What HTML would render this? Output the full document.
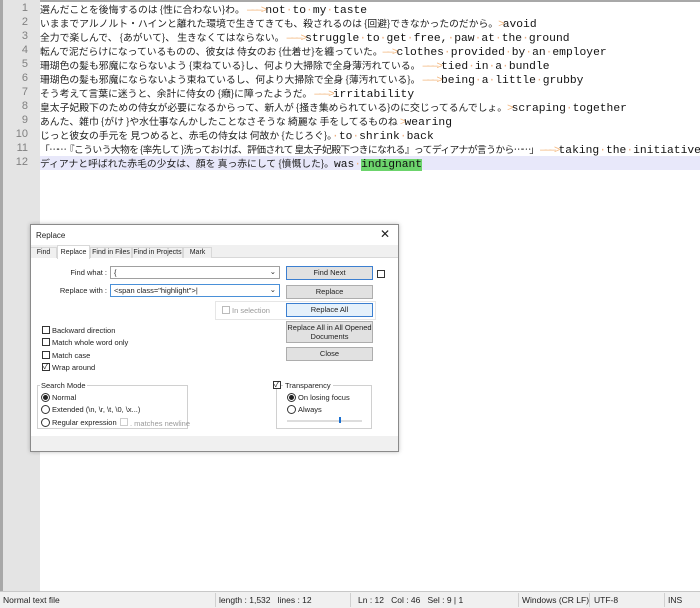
<!DOCTYPE html>
<html><head><meta charset="utf-8"><style>
*{box-sizing:border-box;margin:0;padding:0}
body{width:700px;height:608px;position:relative;background:#fff;overflow:hidden;font-family:"Liberation Sans","Noto Sans CJK JP",sans-serif}
.gut{position:absolute;left:0;top:0;width:40px;height:591px;background:#e4e4e4;border-left:3px solid #a8a8a8}
.topb{position:absolute;left:0;top:0;width:700px;height:2px;background:#a8a8a8}
.ln{position:absolute;left:0;width:28px;text-align:right;font:11px "Liberation Sans",sans-serif;color:#808080}
.tx{position:absolute;left:40px;white-space:nowrap;font:9.8px "Noto Sans CJK JP",sans-serif;color:#222;line-height:14px;height:14px}
.m{font-family:"Liberation Mono",monospace;font-size:11.3px;color:#111;letter-spacing:0}
.d{color:#f0b080}
.ar{color:#f3b880;font-family:"Liberation Mono",monospace;font-size:11px;letter-spacing:-2px}
.hl{position:absolute;left:40px;top:156px;width:660px;height:14px;background:#e8e8fa}
.g{background:#6cd46c}
.status{position:absolute;left:0;top:591px;width:700px;height:17px;background:#f0f0f0;border-top:1px solid #c8c8c8;font-size:8.5px;color:#222}
.status span{position:absolute;top:3px;white-space:nowrap}
.status i{position:absolute;top:1px;width:1px;height:14px;background:#d0d0d0}
.dlg{position:absolute;left:30px;top:224px;width:369px;height:228px;background:#fff;border:1px solid #8a8a8a;box-shadow:0 0 4px rgba(0,0,0,.25);font-size:7.5px;color:#222}
.dlg .a{position:absolute;white-space:nowrap}
.tabs{position:absolute;left:0;top:20px;width:367px;height:13px;background:#f0f0f0;border-bottom:1px solid #d8d8d8}
.tab{position:absolute;top:2px;height:11px;border:1px solid #d8d8d8;border-bottom:none;font-size:7px;background:#f0f0f0;text-align:center;white-space:nowrap;line-height:10px}
.inp{position:absolute;height:13px;border:1px solid #a0a0a0;background:#fff;padding:1px 3px;font-size:7.5px}
.btn{position:absolute;left:255px;width:87px;border:1px solid #adadad;background:#e1e1e1;text-align:center;font-size:7.5px;line-height:11px}
.cb{position:absolute;width:8px;height:8px;border:1px solid #333;background:#fff}
.rb{position:absolute;width:9px;height:9px;border:1px solid #333;border-radius:50%;background:#fff}
.grp{position:absolute;border:1px solid #d0d0d0}
</style></head><body>
<div class="topb"></div>
<div class="gut"></div>
<div class="hl"></div>
<div class="ln" style="top:2px">1</div><div class="ln" style="top:16px">2</div><div class="ln" style="top:30px">3</div><div class="ln" style="top:44px">4</div><div class="ln" style="top:58px">5</div><div class="ln" style="top:72px">6</div><div class="ln" style="top:86px">7</div><div class="ln" style="top:100px">8</div><div class="ln" style="top:114px">9</div><div class="ln" style="top:128px">10</div><div class="ln" style="top:142px">11</div><div class="ln" style="top:156px">12</div>
<div class="tx" style="top:2px">選んだことを後悔するのは {性に合わない}わ。 <span class="ar">———&gt;</span><span class="m">not<span class="d">·</span>to<span class="d">·</span>my<span class="d">·</span>taste</span></div>
<div class="tx" style="top:16px">いままでアルノルト・ハインと離れた環境で生きてきても、殺されるのは {回避}できなかったのだから。<span class="ar">&gt;</span><span class="m">avoid</span></div>
<div class="tx" style="top:30px">全力で楽しんで、 {あがいて}、 生きなくてはならない。 <span class="ar">———&gt;</span><span class="m">struggle<span class="d">·</span>to<span class="d">·</span>get<span class="d">·</span>free,<span class="d">·</span>paw<span class="d">·</span>at<span class="d">·</span>the<span class="d">·</span>ground</span></div>
<div class="tx" style="top:44px">転んで泥だらけになっているものの、彼女は 侍女のお {仕着せ}を纏っていた。<span class="ar">——&gt;</span><span class="m">clothes<span class="d">·</span>provided<span class="d">·</span>by<span class="d">·</span>an<span class="d">·</span>employer</span></div>
<div class="tx" style="top:58px">珊瑚色の髪も邪魔にならないよう {束ねている}し、何より大掃除で全身薄汚れている。 <span class="ar">———&gt;</span><span class="m">tied<span class="d">·</span>in<span class="d">·</span>a<span class="d">·</span>bundle</span></div>
<div class="tx" style="top:72px">珊瑚色の髪も邪魔にならないよう束ねているし、何より大掃除で全身 {薄汚れている}。 <span class="ar">———&gt;</span><span class="m">being<span class="d">·</span>a<span class="d">·</span>little<span class="d">·</span>grubby</span></div>
<div class="tx" style="top:86px">そう考えて言葉に迷うと、余計に侍女の {癪}に障ったようだ。 <span class="ar">———&gt;</span><span class="m">irritability</span></div>
<div class="tx" style="top:100px">皇太子妃殿下のための侍女が必要になるからって、新人が {掻き集められている}のに交じってるんでしょ。<span class="ar">&gt;</span><span class="m">scraping<span class="d">·</span>together</span></div>
<div class="tx" style="top:114px">あんた、雑巾 {がけ }や水仕事なんかしたことなさそうな 綺麗な 手をしてるものね <span class="ar">&gt;</span><span class="m">wearing</span></div>
<div class="tx" style="top:128px">じっと彼女の手元を 見つめると、赤毛の侍女は 何故か {たじろぐ}。<span class="m"><span class="d">·</span>to<span class="d">·</span>shrink<span class="d">·</span>back</span></div>
<div class="tx" style="top:142px;letter-spacing:-0.6px">「<span style="letter-spacing:-2px">……</span>『こういう大物を {率先して }洗っておけば、評価されて 皇太子妃殿下つきになれる』ってディアナが言うから<span style="letter-spacing:-2px">……</span>」 <span class="ar">———&gt;</span><span class="m">taking<span class="d">·</span>the<span class="d">·</span>initiative</span></div>
<div class="tx" style="top:156px">ディアナと呼ばれた赤毛の少女は、顔を 真っ赤にして {憤慨した}。<span class="m">was<span class="d">·</span><span class="g">indignant</span></span></div>

<div class="dlg">
<div class="a" style="left:5px;top:6px;font-size:8px">Replace</div>
<div class="a" style="right:8px;top:2px;font-size:12px">✕</div>
<div class="tabs">
<div class="tab" style="left:0;width:26px;border-left:none">Find</div>
<div class="tab" style="left:26px;width:33px;top:0;height:14px;background:#fff;padding-top:2px">Replace</div>
<div class="tab" style="left:59px;width:42px">Find in Files</div>
<div class="tab" style="left:101px;width:51px">Find in Projects</div>
<div class="tab" style="left:152px;width:29px">Mark</div>
</div>
<div class="a" style="right:291px;top:43px">Find what :</div>
<div class="inp" style="left:79px;top:41px;width:170px">{<span style="position:absolute;right:3px;top:0">⌄</span></div>
<div class="a" style="right:291px;top:61px">Replace with :</div>
<div class="inp" style="left:79px;top:59px;width:170px;border-color:#4a90d8">&lt;span class="highlight"&gt;|<span style="position:absolute;right:3px;top:0">⌄</span></div>
<div class="btn" style="top:41px;height:14px;border-color:#3c7fd0">Find Next</div>
<div class="cb" style="left:346px;top:45px"></div>
<div class="btn" style="top:60px;height:14px">Replace</div>
<div class="grp" style="left:184px;top:76px;width:161px;height:19px;border-color:#e6e6e6"></div>
<div class="cb" style="left:191px;top:81px;border-color:#bbb"></div>
<div class="a" style="left:201px;top:81px;color:#999">In selection</div>
<div class="btn" style="top:78px;height:14px;background:#e5f1fb;border-color:#3c7fd0">Replace All</div>
<div class="btn" style="top:96px;height:22px;line-height:9px;padding-top:1px">Replace All in All Opened Documents</div>
<div class="btn" style="top:122px;height:14px">Close</div>
<div class="cb" style="left:11px;top:101px"></div><div class="a" style="left:21px;top:101px">Backward direction</div>
<div class="cb" style="left:11px;top:113px"></div><div class="a" style="left:21px;top:113px">Match whole word only</div>
<div class="cb" style="left:11px;top:126px"></div><div class="a" style="left:21px;top:126px">Match case</div>
<div class="cb" style="left:11px;top:138px;font-size:8px;line-height:6px">✓</div><div class="a" style="left:21px;top:138px">Wrap around</div>
<div class="grp" style="left:6px;top:160px;width:151px;height:44px"></div>
<div class="a" style="left:9px;top:156px;background:#fff;padding:0 1px">Search Mode</div>
<div class="rb" style="left:10px;top:168px"><div style="width:5px;height:5px;border-radius:50%;background:#222;margin:1px"></div></div><div class="a" style="left:21px;top:168px">Normal</div>
<div class="rb" style="left:10px;top:180px"></div><div class="a" style="left:21px;top:180px">Extended (\n, \r, \t, \0, \x...)</div>
<div class="rb" style="left:10px;top:193px"></div><div class="a" style="left:21px;top:193px">Regular expression</div>
<div class="cb" style="left:89px;top:193px;border-color:#ccc"></div><div class="a" style="left:99px;top:194px;color:#999">. matches newline</div>
<div class="grp" style="left:245px;top:160px;width:96px;height:44px"></div>
<div class="cb" style="left:242px;top:156px;font-size:8px;line-height:6px">✓</div><div class="a" style="left:252px;top:156px;background:#fff;padding:0 2px">Transparency</div>
<div class="rb" style="left:256px;top:168px"><div style="width:5px;height:5px;border-radius:50%;background:#222;margin:1px"></div></div><div class="a" style="left:267px;top:168px">On losing focus</div>
<div class="rb" style="left:256px;top:180px"></div><div class="a" style="left:267px;top:180px">Always</div>
<div class="a" style="left:256px;top:195px;width:75px;height:2px;background:#ddd"></div>
<div class="a" style="left:308px;top:192px;width:2px;height:6px;background:#1a6fd0"></div>
<div class="a" style="left:0;top:211px;width:367px;height:15px;background:#f0f0f0"></div>
</div>

<div class="status">
<span style="left:3px">Normal text file</span><i style="left:215px"></i>
<span style="left:219px">length : 1,532 &nbsp; lines : 12</span><i style="left:350px"></i>
<span style="left:358px">Ln : 12 &nbsp; Col : 46 &nbsp; Sel : 9 | 1</span><i style="left:518px"></i>
<span style="left:522px">Windows (CR LF)</span><i style="left:589px"></i>
<span style="left:594px">UTF-8</span><i style="left:664px"></i>
<span style="left:668px">INS</span>
</div>
</body></html>
